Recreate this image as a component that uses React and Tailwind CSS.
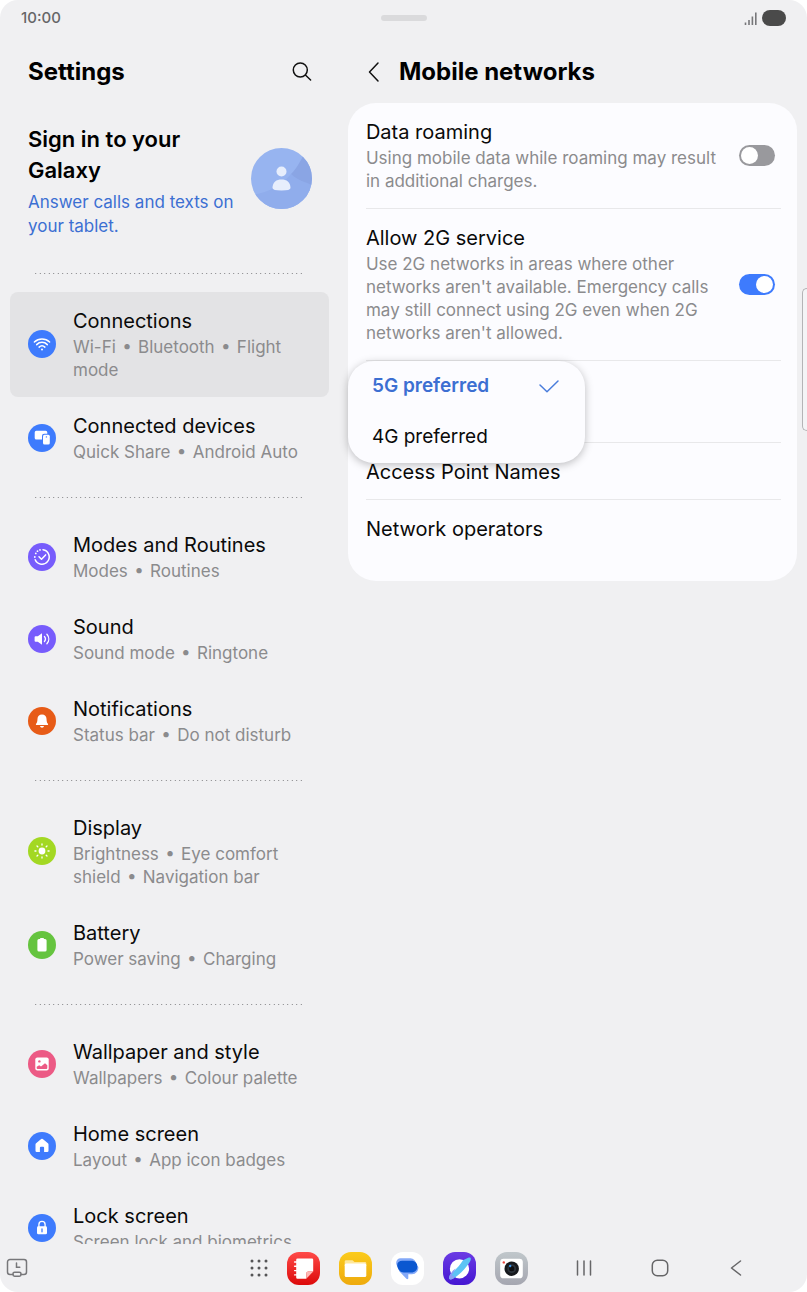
import React, { useState } from 'react';

const iconGroups = [
  [
    { title: 'Connections', items: ['Wi-Fi', 'Bluetooth', 'Flight mode'], color: 'bg-[#3e7bfd]', icon: 'wifi', active: true },
    { title: 'Connected devices', items: ['Quick Share', 'Android Auto'], color: 'bg-[#3e7bfd]', icon: 'devices' },
  ],
  [
    { title: 'Modes and Routines', items: ['Modes', 'Routines'], color: 'bg-[#775cfc]', icon: 'modes' },
    { title: 'Sound', items: ['Sound mode', 'Ringtone'], color: 'bg-[#775cfc]', icon: 'sound' },
    { title: 'Notifications', items: ['Status bar', 'Do not disturb'], color: 'bg-[#e75b17]', icon: 'bell' },
  ],
  [
    { title: 'Display', items: ['Brightness', 'Eye comfort shield', 'Navigation bar'], color: 'bg-[#a3d823]', icon: 'sun' },
    { title: 'Battery', items: ['Power saving', 'Charging'], color: 'bg-[#65c43f]', icon: 'battery' },
  ],
  [
    { title: 'Wallpaper and style', items: ['Wallpapers', 'Colour palette'], color: 'bg-[#ec5a85]', icon: 'picture' },
    { title: 'Home screen', items: ['Layout', 'App icon badges'], color: 'bg-[#3e7bfd]', icon: 'home' },
    { title: 'Lock screen', items: ['Screen lock and biometrics'], color: 'bg-[#3e7bfd]', icon: 'lock' },
  ],
];

// All glyphs share a 28x28 box, the size of the round badge
const glyphs = {
  wifi: (
    <g fill="none" stroke="#fff" strokeWidth="1.5" strokeLinecap="round">
      <path d="M6.4 12C10.6 7.9 17.4 7.9 21.6 12" />
      <path d="M8.7 14.6C11.7 11.6 16.3 11.6 19.3 14.6" />
      <path d="M11.1 17.1C12.8 15.5 15.2 15.5 16.9 17.1" />
      <circle cx="14" cy="19.6" r="1" fill="#fff" stroke="none" />
    </g>
  ),
  devices: (
    <g fill="#fff">
      <path d="M8.3 6.8H17.7A1.6 1.6 0 0 1 19.3 8.4V9.7H16.2A2.2 2.2 0 0 0 14 11.9V15.6H8.3A1.6 1.6 0 0 1 6.7 14V8.4A1.6 1.6 0 0 1 8.3 6.8Z" />
      <rect x="15" y="10.8" width="6.8" height="9.8" rx="1.5" />
      <circle cx="18.4" cy="12.9" r="0.7" fill="#3e7bfd" />
    </g>
  ),
  modes: (
    <g fill="none" stroke="#fff" strokeWidth="1.5" strokeLinecap="round" strokeLinejoin="round">
      <path d="M15 6.7A7.3 7.3 0 1 1 7.2 16.8" />
      <path d="M11 13.8L13.5 16.2L17.6 11.9" />
      <g fill="#fff" stroke="none">
        <circle cx="6.8" cy="14" r="0.9" />
        <circle cx="7.8" cy="10.4" r="0.9" />
        <circle cx="9.5" cy="8.2" r="0.9" />
        <circle cx="12" cy="6.9" r="0.9" />
      </g>
    </g>
  ),
  sound: (
    <g>
      <path fill="#fff" d="M7.6 11.2H9.8L14 8.2V19.8L9.8 16.8H7.6A1 1 0 0 1 6.6 15.8V12.2A1 1 0 0 1 7.6 11.2Z" />
      <path fill="none" stroke="#fff" strokeWidth="1.3" strokeLinecap="round" d="M16.4 11.4C17.6 12.8 17.6 15.2 16.4 16.6M18.9 9.2C21.4 12 21.4 16 18.9 18.8" />
    </g>
  ),
  bell: (
    <g fill="#fff">
      <path d="M14 7.4C16.8 7.4 18.4 9.3 18.5 11.7C18.6 14.6 19 15.6 19.9 16.7C20.4 17.4 20 18.1 19.2 18.1H8.8C8 18.1 7.6 17.4 8.1 16.7C9 15.6 9.4 14.6 9.5 11.7C9.6 9.3 11.2 7.4 14 7.4Z" />
      <path d="M12 19H16C15.7 20.1 15 20.7 14 20.7S12.3 20.1 12 19Z" />
    </g>
  ),
  sun: (
    <g fill="#fff" stroke="#fff" strokeWidth="1.3" strokeLinecap="round">
      <circle cx="14" cy="14" r="3.4" stroke="none" />
      <path d="M14 6.9V8M14 20V21.1M6.9 14H8M20 14H21.1M9 9L9.8 9.8M18.2 18.2L19 19M9 19L9.8 18.2M18.2 9.8L19 9" />
    </g>
  ),
  battery: (
    <path fill="#fff" d="M12.2 7H15.8V8H17A1.6 1.6 0 0 1 18.6 9.6V19A1.6 1.6 0 0 1 17 20.6H11A1.6 1.6 0 0 1 9.4 19V9.6A1.6 1.6 0 0 1 11 8H12.2Z" />
  ),
  picture: (
    <g>
      <rect x="7.3" y="7.5" width="13.4" height="13" rx="2" fill="#fff" />
      <path fill="#ec5a85" d="M8.7 18V16.8L11.2 15.2L13 16.4L17 13.2L19.3 15.2V18A1 1 0 0 1 18.3 19H9.7A1 1 0 0 1 8.7 18Z" />
      <circle cx="11.4" cy="11.4" r="1.2" fill="#ec5a85" />
    </g>
  ),
  home: (
    <path fill="#fff" d="M13.2 7.1Q14 6.5 14.8 7.1L19.9 11.2Q20.5 11.7 20.5 12.5V18.8A1.3 1.3 0 0 1 19.2 20.1H16.1V15.8A1 1 0 0 0 15.1 14.8H12.9A1 1 0 0 0 11.9 15.8V20.1H8.8A1.3 1.3 0 0 1 7.5 18.8V12.5Q7.5 11.7 8.1 11.2Z" />
  ),
  lock: (
    <g>
      <path fill="none" stroke="#fff" strokeWidth="1.3" d="M10.9 13V10.4A3.1 3.1 0 0 1 17.1 10.4V13" />
      <rect x="9" y="12.3" width="10" height="8" rx="1.4" fill="#fff" />
      <path stroke="#3e7bfd" strokeWidth="1.3" strokeLinecap="round" d="M14 15V17.8" />
    </g>
  ),
};

const DottedLine = () => (
  <div className="my-[18px] mr-[34px] ml-[35px] h-px bg-[linear-gradient(90deg,#97979a_0_1px,#dcdcde_1px_2px,transparent_2px_4px,#dcdcde_4px_5px,#97979a_5px_6px,transparent_6px)] bg-size-[9px_1px]" />
);

const MenuRow = ({ row }) => (
  <li>
    <button
      type="button"
      className={`flex w-full items-center gap-[17px] rounded-lg pt-[14px] pr-4 pb-[15px] pl-[18px] text-left ${row.active ? 'bg-[#e3e3e5]' : ''}`}
    >
      <span className={`h-7 w-7 shrink-0 rounded-full ${row.color}`}>
        <svg viewBox="0 0 28 28" className="h-7 w-7" aria-hidden="true">{glyphs[row.icon]}</svg>
      </span>
      <span className="flex-1">
        <span className="block text-[20px] leading-[30px] text-[#0a0a0a]">{row.title}</span>
        <span className="block text-[17px] leading-[23px] text-[#8b8b8d]">{row.items.join(' \u200a•\u200a ')}</span>
      </span>
    </button>
  </li>
);

const SettingsPane = () => (
  <nav className="flex w-[42%] shrink-0 flex-col overflow-hidden" aria-label="Settings">
    <div className="mt-1 flex h-16 shrink-0 items-center justify-between pr-[26px] pl-7">
      <h1 className="text-[24px] leading-8 font-bold text-black">Settings</h1>
      <button type="button" aria-label="Search">
        <svg viewBox="0 0 22 22" className="h-[22px] w-[22px]" fill="none" stroke="#111" strokeWidth="1.5" strokeLinecap="round">
          <circle cx="9.3" cy="9" r="7" />
          <path d="M14.4 14L19.6 19" />
        </svg>
      </button>
    </div>

    <div className="mt-5 flex items-start justify-between pr-[27px] pl-7">
      <div className="w-[215px]">
        <h2 className="text-[22px] leading-[31px] font-semibold text-black">Sign in to your Galaxy</h2>
        <a href="#signin" className="mt-1 block text-[17px] leading-6 text-[#3c6fd2]">
          Answer calls and texts on your tablet.
        </a>
      </div>
      <svg viewBox="0 0 61 61" className="mt-6 h-[61px] w-[61px] shrink-0" aria-hidden="true">
        <clipPath id="avatar">
          <circle cx="30.5" cy="30.5" r="30.5" />
        </clipPath>
        <g clipPath="url(#avatar)">
          <rect width="61" height="61" fill="#97b4f0" />
          <path d="M0 47C16 45 30 38 40 26L61 37V61H0Z" fill="#90adec" />
          <path d="M40 26C46 20 50 12 52 8L61 12V37C54 34 46 32 40 26Z" fill="#8aa5e4" />
        </g>
        <circle cx="30.5" cy="23.5" r="5" fill="#e7eefc" />
        <path d="M21.5 40C21.5 34 25.5 31.5 30.5 31.5S39.5 34 39.5 40Q39.5 42.5 30.5 42.5T21.5 40Z" fill="#e7eefc" />
      </svg>
    </div>

    <div className="mt-[17px]">
      {iconGroups.map((group, i) => (
        <React.Fragment key={i}>
          <DottedLine />
          <ul className="mx-[10px]">
            {group.map((row) => (
              <MenuRow key={row.title} row={row} />
            ))}
          </ul>
        </React.Fragment>
      ))}
    </div>
  </nav>
);

const SwitchRow = ({ id, title, text, checked, onChange }) => (
  <div className="flex items-center justify-between gap-4 pt-[14px] pr-[6px] pb-[15px]">
    <label htmlFor={id} className="flex-1">
      <span className="block text-[20px] leading-[30px] text-[#0a0a0a]">{title}</span>
      <span className="block text-[17px] leading-[23px] text-[#8b8b8d]">{text}</span>
    </label>
    <input
      id={id}
      type="checkbox"
      role="switch"
      checked={checked}
      onChange={(e) => onChange(e.target.checked)}
      className="flex h-[21px] w-9 shrink-0 appearance-none items-center rounded-full bg-[#99999d] px-[2px] before:h-[17px] before:w-[17px] before:rounded-full before:bg-white checked:justify-end checked:bg-[#3e7bfd]"
    />
  </div>
);

const NetworkModeMenu = ({ mode, onSelect }) => (
  <div role="listbox" aria-label="Network mode" className="absolute top-0 -left-[18px] z-10 w-[237px] rounded-[26px] bg-[#fcfcff] shadow-[0_2px_8px_rgba(0,0,0,0.25)]">
    {['5G preferred', '4G preferred'].map((name) => (
      <button
        key={name}
        type="button"
        role="option"
        aria-selected={mode === name}
        onClick={() => onSelect(name)}
        className={`flex h-[51px] w-full items-center justify-between pr-[25px] pl-6 text-[19px] ${mode === name ? 'font-semibold text-[#3c6fd2]' : 'text-[#0a0a0a]'}`}
      >
        {name}
        {mode === name && (
          <svg viewBox="0 0 22 16" className="h-4 w-[22px]" fill="none" stroke="#4a7ddc" strokeWidth="1.5" strokeLinecap="round" strokeLinejoin="round">
            <path d="M2 6L9 12.8L20 2" />
          </svg>
        )}
      </button>
    ))}
  </div>
);

const MobileNetworks = () => {
  const [roaming, setRoaming] = useState(false);
  const [allow2g, setAllow2g] = useState(true);
  const [mode, setMode] = useState('5G preferred');

  return (
    <main className="flex-1 pr-[10px] pl-[9px]">
      <div className="mt-1 flex h-[63px] items-center gap-4 pl-[19px]">
        <button type="button" aria-label="Back">
          <svg viewBox="0 0 16 22" className="h-[22px] w-4" fill="none" stroke="#111" strokeWidth="1.5" strokeLinecap="round" strokeLinejoin="round">
            <path d="M11 2L2.5 11L11 20" />
          </svg>
        </button>
        <h2 className="text-[24px] leading-8 font-bold text-black">Mobile networks</h2>
      </div>
      <section className="rounded-[28px] bg-[#fcfcff] pr-4 pb-[25px] pl-[18px]">
        <div className="divide-y divide-[#e8e8ea]">
          <SwitchRow
            id="roaming"
            title="Data roaming"
            text="Using mobile data while roaming may result in additional charges."
            checked={roaming}
            onChange={setRoaming}
          />
          <SwitchRow
            id="allow2g"
            title="Allow 2G service"
            text="Use 2G networks in areas where other networks aren't available. Emergency calls may still connect using 2G even when 2G networks aren't allowed."
            checked={allow2g}
            onChange={setAllow2g}
          />
          <div className="relative h-[82px]">
            <NetworkModeMenu mode={mode} onSelect={setMode} />
          </div>
          <button type="button" className="block w-full pt-[14px] pb-3 text-left text-[20px] leading-[30px] text-[#0a0a0a]">
            Access Point Names
          </button>
          <button type="button" className="block w-full pt-[14px] pb-3 text-left text-[20px] leading-[30px] text-[#0a0a0a]">
            Network operators
          </button>
        </div>
      </section>
    </main>
  );
};

const StatusBar = () => (
  <header className="grid h-9 shrink-0 grid-cols-3 items-center px-[21px]">
    <time className="text-[15px] font-medium text-[#666668]">10:00</time>
    <div className="h-[6px] w-[46px] justify-self-center rounded-full bg-[#dadadc]" />
    <div className="flex items-center gap-[5px] justify-self-end">
      <svg viewBox="0 0 13 13" className="h-[13px] w-[13px]" stroke="#77777a" strokeWidth="1.6" aria-hidden="true">
        <path d="M1.5 10.5V13M5 8V13M8.4 4.5V13M11.8 0.5V13" />
      </svg>
      <span className="h-4 w-6 rounded-full bg-[#4a4a4a]" />
    </div>
  </header>
);

const dockApps = [
  {
    name: 'Notes',
    art: (
      <>
        <defs>
          <linearGradient id="notes" x1="0" y1="0" x2="0" y2="1">
            <stop offset="0" stopColor="#ff4a48" />
            <stop offset="1" stopColor="#dc0a0a" />
          </linearGradient>
        </defs>
        <rect width="33" height="33" rx="12" fill="url(#notes)" />
        <path fill="#fff" d="M10.5 6.5H25A1.2 1.2 0 0 1 26.2 7.7V19.5H21.3A2 2 0 0 0 19.3 21.5V26.8H10.5A1.3 1.3 0 0 1 9.2 25.5V7.8A1.3 1.3 0 0 1 10.5 6.5Z" />
        <path fill="#ffb9b5" d="M26.2 19.5L19.3 26.8V21.5A2 2 0 0 1 21.3 19.5Z" />
        <path stroke="#fff" strokeWidth="1.4" strokeLinecap="round" d="M7.6 10H9.5M7.6 14.3H9.5M7.6 18.6H9.5M7.6 22.9H9.5" />
      </>
    ),
  },
  {
    name: 'My Files',
    art: (
      <>
        <defs>
          <linearGradient id="files" x1="0" y1="0" x2="0" y2="1">
            <stop offset="0" stopColor="#fbcb1c" />
            <stop offset="1" stopColor="#eeaa0d" />
          </linearGradient>
        </defs>
        <rect width="33" height="33" rx="12" fill="url(#files)" />
        <path fill="#fee79a" d="M7 8.2H13.5L15.5 10H26A1.3 1.3 0 0 1 27.3 11.3V14H5.7V9.5A1.3 1.3 0 0 1 7 8.2Z" />
        <rect x="5.7" y="11.6" width="21.6" height="13.4" rx="1.5" fill="#fff" />
      </>
    ),
  },
  {
    name: 'Messages',
    art: (
      <>
        <rect width="33" height="33" rx="12" fill="#fff" />
        <path fill="#84a9f8" d="M9.5 6.3H19.5A5.5 5.5 0 0 1 25 11.8L27.3 15A6.5 6.5 0 0 1 21 22.3H17.3V26C17.3 27.2 16.3 27.6 15.4 26.7L8.5 19.5L5.2 12V10.6A4.3 4.3 0 0 1 9.5 6.3Z" />
        <path fill="#0b57d0" d="M11.2 8.8H21.5A5.9 5.9 0 0 1 21.5 20.4H13C9 20.4 7.2 17.8 6.4 14.6C5.5 11.2 7.8 8.8 11.2 8.8Z" />
      </>
    ),
  },
  {
    name: 'Internet',
    art: (
      <>
        <defs>
          <linearGradient id="web" x1="0" y1="0" x2="0" y2="1">
            <stop offset="0" stopColor="#6b3be4" />
            <stop offset="1" stopColor="#4516d2" />
          </linearGradient>
        </defs>
        <rect width="33" height="33" rx="12" fill="url(#web)" />
        <circle cx="16.5" cy="16.8" r="9.6" fill="#fff" />
        <path d="M25.2 5.8C28 5 28.6 6.8 26.9 9.8C23.6 15.6 16.2 23 10.6 26.4C7 28.4 5.2 27.4 6.3 24.5L7.4 22C12 18.5 17.5 12.5 20 8.2Z" fill="#5cc4f4" />
        <path d="M7.2 22.2L10 18.5L12.6 16.5L9.2 22.6C8.6 24 9.4 24.4 11.5 23.2L10.2 26.5C7 28.4 5.2 27.4 6.3 24.5Z" fill="#8e9df5" />
      </>
    ),
  },
  {
    name: 'Camera',
    art: (
      <>
        <defs>
          <linearGradient id="camera" x1="0" y1="0" x2="0" y2="1">
            <stop offset="0" stopColor="#c0c7cb" />
            <stop offset="1" stopColor="#a5a6b0" />
          </linearGradient>
        </defs>
        <rect width="33" height="33" rx="12" fill="url(#camera)" />
        <rect x="5.2" y="6.7" width="22.6" height="19.6" rx="3.4" fill="#fff" />
        <circle cx="16.7" cy="16.7" r="7.2" fill="#17191d" />
        <circle cx="16.7" cy="16.7" r="4.4" fill="#2c333b" />
        <circle cx="16.7" cy="16.7" r="2.6" fill="#0c0d10" />
        <circle cx="15.2" cy="14" r="1.2" fill="#3d95e8" />
        <circle cx="8.8" cy="10.4" r="1.2" fill="#e8453c" />
      </>
    ),
  },
];

const NavigationBar = () => (
  <footer className="flex h-12 shrink-0 items-center pr-[61px] pl-[6px]">
    <button type="button" aria-label="Recent tasks">
      <svg viewBox="0 0 22 20" className="h-5 w-[22px]" fill="none" stroke="#77777a" strokeWidth="1.5" strokeLinecap="round">
        <path d="M7 16.5H4A2.5 2.5 0 0 1 1.5 14V4A2.5 2.5 0 0 1 4 1.5H18A2.5 2.5 0 0 1 20.5 4V14A2.5 2.5 0 0 1 18 16.5H15" />
        <rect x="7" y="14.2" width="8" height="4" rx="1.6" />
        <path d="M10.5 5V9.2H13.8" />
      </svg>
    </button>
    <div className="ml-auto flex items-center gap-[19px]">
      <button type="button" aria-label="All apps">
        <svg viewBox="0 0 18 18" className="h-[18px] w-[18px]" fill="#555557">
          {[2, 9, 16].map((y) => [2, 9, 16].map((x) => <circle key={`${x}-${y}`} cx={x} cy={y} r="1.5" />))}
        </svg>
      </button>
      {dockApps.map((app) => (
        <button key={app.name} type="button" aria-label={app.name}>
          <svg viewBox="0 0 33 33" className="h-[33px] w-[33px]">{app.art}</svg>
        </button>
      ))}
    </div>
    <div className="ml-[46px] flex items-center gap-14">
      <button type="button" aria-label="Recents">
        <svg viewBox="0 0 20 20" className="h-5 w-5" stroke="#666668" strokeWidth="1.5" strokeLinecap="round">
          <path d="M3.5 3V17M10 3V17M16.5 3V17" />
        </svg>
      </button>
      <button type="button" aria-label="Home">
        <svg viewBox="0 0 20 20" className="h-5 w-5" fill="none" stroke="#666668" strokeWidth="1.5">
          <rect x="2.3" y="2.3" width="15.4" height="15.4" rx="5" />
        </svg>
      </button>
      <button type="button" aria-label="Back">
        <svg viewBox="0 0 20 20" className="h-5 w-5" fill="none" stroke="#666668" strokeWidth="1.5" strokeLinecap="round" strokeLinejoin="round">
          <path d="M14.5 3L5.5 10L14.5 17" />
        </svg>
      </button>
    </div>
  </footer>
);

export default function App() {
  return (
    <div className="h-screen bg-white font-['Inter',sans-serif]">
      <div className="relative flex h-full flex-col overflow-hidden rounded-[18px] bg-[#f0f0f2]">
        <StatusBar />
        <div className="flex min-h-0 flex-1">
          <SettingsPane />
          <MobileNetworks />
        </div>
        <NavigationBar />
        {/* edge panel handle */}
        <div className="absolute top-72 right-0 h-[143px] w-[5px] rounded-l-md border border-r-0 border-[#b4b4b6] bg-[#f4f4f6]" />
      </div>
    </div>
  );
}
